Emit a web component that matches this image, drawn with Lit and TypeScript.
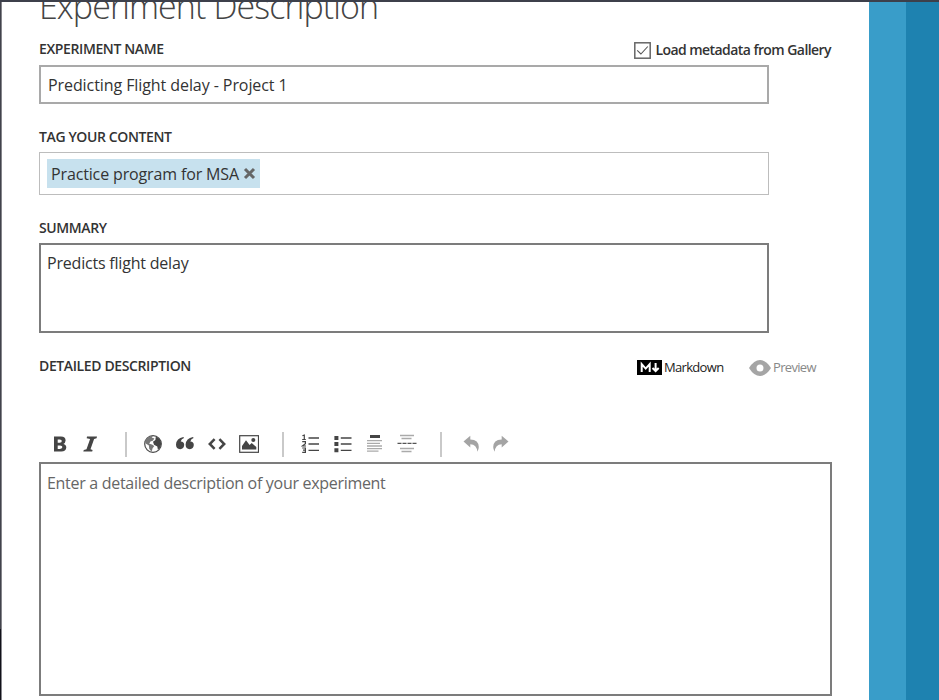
import { LitElement, html, css, svg } from "lit";
import { customElement } from "lit/decorators.js";

const ICONS: Record<string, unknown> = {
  bold: svg`<path fill-rule="evenodd" d="M3 2.6H10Q14.6 2.8 14.6 6.6Q14.5 9 12.4 9.9Q15.3 10.7 15.3 13.5Q15 17.5 10.3 17.6H3ZM6.7 5.4V8.7H8.8Q10.8 8.6 10.8 7Q10.8 5.4 8.8 5.4ZM6.7 11.4V14.9H9Q11.4 14.8 11.4 13.1Q11.4 11.4 9 11.4Z"/>`,
  italic: svg`<path d="M7 2.5H17L16.6 4.2L14.1 4.9L10.5 15.3L12.6 16L12.2 17.6H3.3L3.8 16L6.5 15.3L10.1 4.9L6.7 4.2Z"/>`,
  globe: svg`<circle cx="10" cy="10" r="8.3" fill="#fff" stroke="#4a4a4a" stroke-width="1.2"/><path d="M2 7Q4 2 10 1.7L8.7 3.6L11.4 4.5L9.8 6.8L7.4 7.5L6.2 9.7L9 10.4L11.3 12L9.6 14.2L8.6 17.8L6.2 14.7L5.9 11.4L2.7 9.5Z" fill="#777"/><path d="M12.8 2.6L16.7 5L18.3 9.6L17.2 13.4L14.9 15.8L14.3 12.4L11 10.8L10 7.8L12.4 6.1Z"/>`,
  quote: svg`<path d="M9 4.1Q6.4 5 5.7 7.5Q9.2 7.5 9.2 11.1Q8.9 15 5.2 15.2Q1 15 1 10.5Q1.4 4.3 8.4 3ZM18.6 4.1Q16 5 15.3 7.5Q18.8 7.5 18.8 11.1Q18.5 15 14.8 15.2Q10.6 15 10.6 10.5Q11 4.3 18 3Z"/>`,
  code: svg`<path d="M7.6 5.2L2.8 10L7.6 14.8M12.4 5.2L17.2 10L12.4 14.8" fill="none" stroke="#454545" stroke-width="2.5"/>`,
  undo: svg`<path d="M1.5 7.6L8.3 1.8V5.4Q16.8 5.8 16.8 13Q16.8 15.5 15.3 17.8Q14.8 10.5 8.3 10.2V13.6Z"/>`,
  redo: svg`<path d="M18.5 7.6L11.7 1.8V5.4Q3.2 5.8 3.2 13Q3.2 15.5 4.7 17.8Q5.2 10.5 11.7 10.2V13.6Z"/>`,
};

@customElement("app-root")
export class AppRoot extends LitElement {
  static styles = css`
    :host {
      display: flex;
      box-sizing: border-box;
      width: 939px;
      height: 700px;
      overflow: hidden;
      background: #fff;
      border-top: 2px solid #3d404b;
      font: 16px/20px "Open Sans", "Noto Sans", sans-serif;
      color: #333;
    }
    * { box-sizing: border-box; }
    .edge { width: 2px; flex: none; background: linear-gradient(#42434c 0 627px, #101018 627px); border-right: 1px solid #85858b; }
    .page { width: 867px; flex: none; padding-left: 37px; white-space: nowrap; }
    .light { width: 37px; background: #399dc9; }
    .dark { width: 33px; background: #1e82b0; }
    h1 { margin: -20px 0 0; height: 56px; font-size: 34px; line-height: 48px; font-weight: 300; color: #444; letter-spacing: -0.92px; }
    .head { display: flex; justify-content: space-between; width: 792px; height: 27px; align-items: flex-start; }
    .label { font-size: 14px; font-weight: 600; line-height: 22px; letter-spacing: -0.38px; color: #333; }
    .check { display: flex; align-items: center; gap: 4px; font-size: 14px; font-weight: 600; line-height: 22px; letter-spacing: -0.56px; margin-top: 1px; }
    svg { display: block; flex: none; }
    .field { width: 730px; border: 2px solid #a9a9a9; }
    .name { height: 39px; padding: 8px 7px; letter-spacing: -0.08px; }
    .tags { height: 43px; padding: 6px 7px; border: 1px solid #bdbdbd; margin-top: 4px; }
    .chip { display: flex; align-items: center; justify-content: space-between; width: 213px; height: 29px; padding: 0 4px; background: #c7e1ee; letter-spacing: -0.14px; }
    .summary { height: 90px; margin-top: 4px; padding: 8px 6px; border: 2px solid #7c7c7c; letter-spacing: -0.2px; }
    .tagl { margin-top: 22px; }
    .suml { margin-top: 22px; }
    .modes { display: flex; margin-top: 22px; width: 793px; height: 24px; }
    .modes .label { width: 598px; }
    .mode { display: flex; align-items: center; gap: 2px; font-size: 13px; letter-spacing: -0.68px; color: #222; height: 25px; }
    .mode span { margin-top: -2px; }
    .md { width: 112px; }
    .pv { color: #888; }
    .bar { display: flex; align-items: center; height: 36px; margin-top: 47px; padding-left: 12px; fill: #454545; }
    .bar svg { margin-right: 12px; }
    .bar .b { margin-right: 9px; }
    .bar .muted { fill: #a4a4a4; margin-right: 8px; }
    .sep { width: 2px; height: 25px; background: #c9c9c9; }
    .s1 { margin: 0 16px 0 13px; }
    .s2 { margin: 0 17px 0 11px; }
    .s3 { margin: 0 20px 0 11px; }
    .editor { width: 793px; height: 234px; border: 2px solid #7c7c7c; padding: 9px 6px; color: #666; letter-spacing: -0.3px; }
  `;

  private icon(name: string, cls = "") {
    return html`<svg class=${cls} width="20" height="20" viewBox="0 0 20 20">${ICONS[name]}</svg>`;
  }

  render() {
    return html`
      <div class="edge"></div>
      <main class="page">
        <h1>Experiment Description</h1>
        <div class="head">
          <span class="label">EXPERIMENT NAME</span>
          <span class="check">
            <svg width="17" height="17" viewBox="0 0 17 17" fill="none"><rect x=".8" y=".8" width="15.4" height="15.4" stroke="#666" stroke-width="1.5"/><path d="M3.2 8.4L6.9 12L13.8 4.5" stroke="#555" stroke-width="1.1"/></svg>
            <span class="checktext">Load metadata from Gallery</span>
          </span>
        </div>
        <div class="field name">Predicting Flight delay - Project 1</div>
        <div class="label tagl">TAG YOUR CONTENT</div>
        <div class="field tags">
          <div class="chip"><span>Practice program for MSA</span>
            <svg width="13" height="13" viewBox="0 0 13 13"><path d="M2 2L11 11M11 2L2 11" stroke="#666" stroke-width="3"/></svg>
          </div>
        </div>
        <div class="label suml">SUMMARY</div>
        <div class="field summary">Predicts flight delay</div>
        <div class="modes">
          <span class="label">DETAILED DESCRIPTION</span>
          <span class="mode md">
            <svg width="25" height="15" viewBox="0 0 25 15"><rect width="25" height="15"/><path d="M4.7 12V4.2L8.7 8.6L12.7 4.2V12M18.6 3V10.5M15.5 8L18.6 11L21.7 8" fill="none" stroke="#fff" stroke-width="2"/></svg>
            <span>Markdown</span>
          </span>
          <span class="mode pv">
            <svg width="22" height="16" viewBox="0 0 22 16"><path d="M0 8Q5 0 11 0Q17 0 22 8Q17 16 11 16Q5 16 0 8Z" fill="#a5a5a5"/><circle cx="11" cy="8" r="3.5" fill="#fff"/></svg>
            <span>Preview</span>
          </span>
        </div>
        <div class="bar">
          ${this.icon("bold", "b")}${this.icon("italic")}
          <i class="sep s1"></i>
          ${this.icon("globe")}${this.icon("quote")}${this.icon("code")}
          <svg width="20" height="20" viewBox="0 0 20 20"><rect x=".7" y="1.7" width="18.8" height="16.6" fill="#fff" stroke="#454545" stroke-width="1.2"/><path d="M3 15.5V12L7 6.3L10.6 11L12.7 9L17.3 13V15.5Z"/><circle cx="14.3" cy="6" r="2"/></svg>
          <i class="sep s2"></i>
          <svg width="20" height="20" viewBox="0 0 20 20"><path d="M7.5 4H18M7.5 10H18M7.5 16.3H18" stroke="#454545" stroke-width="1.3"/><path d="M1.4 1.7L3.3 1V5.5M1.2 5.5H4.8M1.2 7.6H4.4V9.6L1.4 12H5M1.2 14H4.4V18.3H1.2M2 16.1H4.4" fill="none" stroke="#454545" stroke-width="1.2"/></svg>
          <svg width="20" height="20" viewBox="0 0 20 20"><path d="M1.4 2H5.4V6H1.4ZM1.4 8H5.4V12H1.4ZM1.4 14.3H5.4V18.3H1.4Z"/><path d="M7.8 4H18.5M7.8 10H18.5M7.8 16.3H18.5" stroke="#454545" stroke-width="1.3"/></svg>
          <svg width="20" height="20" viewBox="0 0 20 20"><path d="M5 1H15V4H5Z"/><path d="M2 6.7H17M2 9.3H15M2 12H17M2 14.6H17M2 17.2H13.5" stroke="#aaa" stroke-width="1.3"/></svg>
          <svg width="20" height="20" viewBox="0 0 20 20"><path d="M3 1.5H17M4.5 4.5H14.5M3 14.5H17M4.5 17.5H14.5" stroke="#aaa" stroke-width="1.3"/><path d="M.5 9.3H20" stroke="#555" stroke-width="1.3" stroke-dasharray="4 1"/></svg>
          <i class="sep s3"></i>
          ${this.icon("undo", "muted")}${this.icon("redo", "muted")}
        </div>
        <div class="editor">Enter a detailed description of your experiment</div>
      </main>
      <div class="light"></div>
      <div class="dark"></div>
    `;
  }
}
